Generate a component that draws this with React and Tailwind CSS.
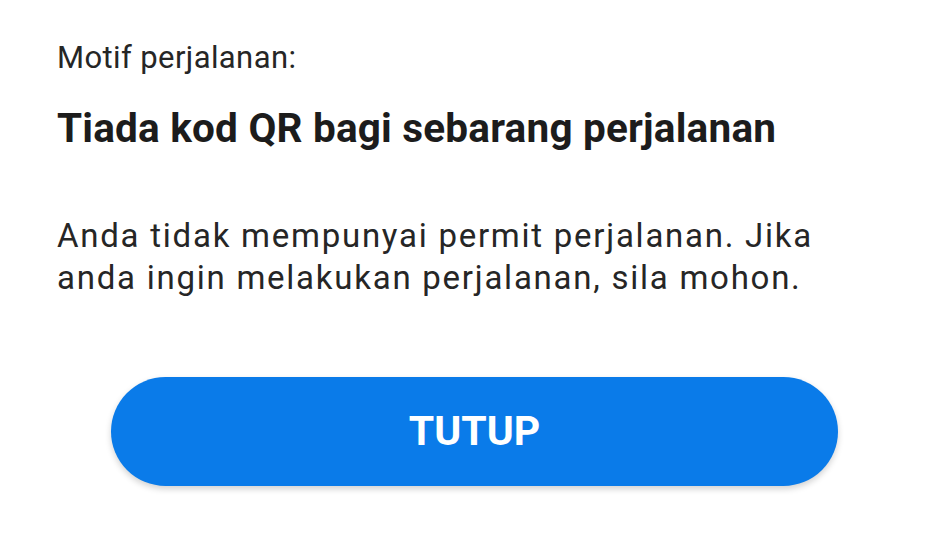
export default function App() {
  return (
    <div className="w-[950px] h-[535px] bg-white overflow-hidden font-['Roboto',sans-serif]">
      <div className="pl-[57px] pt-[40px]">
        <p className="text-[31px] leading-[36px] tracking-[0.4px] text-[#262626]">Motif perjalanan:</p>
        <h1 className="mt-[28px] text-[40.5px] leading-[48px] font-bold tracking-[0.2px] text-[#1c1c1c] whitespace-nowrap">
          Tiada kod QR bagi sebarang perjalanan
        </h1>
        <p className="mt-[63px] text-[33px] leading-[42px] tracking-[1.75px] text-[#262626] whitespace-nowrap">
          Anda tidak mempunyai permit perjalanan. Jika
          <br />
          anda ingin melakukan perjalanan, sila mohon.
        </p>
      </div>
      <div className="mt-[78px] pl-[111px]">
        <button className="w-[727px] h-[109px] rounded-full bg-[#0a7be9] text-white text-[41px] leading-[105px] font-bold shadow-[0_3px_6px_rgba(0,0,0,0.18)]">
          TUTUP
        </button>
      </div>
    </div>
  );
}
